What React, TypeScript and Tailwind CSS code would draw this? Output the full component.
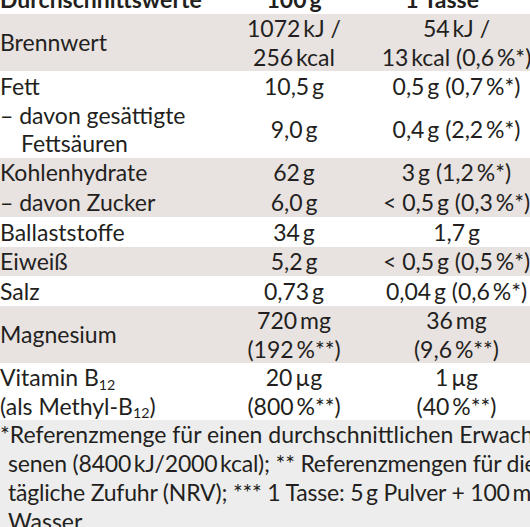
const T = "\u2009";

type Row = {
  label: React.ReactNode;
  a: React.ReactNode;
  b: React.ReactNode;
  grey?: boolean;
  tall?: boolean;
};

const B12 = (
  <>
    B<sub className="text-[62%]">12</sub>
  </>
);

const rows: Row[] = [
  {
    label: "Brennwert",
    a: (
      <>
        1072{T}kJ /<br />256{T}kcal
      </>
    ),
    b: (
      <>
        54{T}kJ /<br />13{T}kcal (0,6{T}%*)
      </>
    ),
    grey: true,
    tall: true,
  },
  { label: "Fett", a: `10,5${T}g`, b: `0,5${T}g (0,7${T}%*)` },
  {
    label: (
      <>
        – davon gesättigte
        <br />
        <span className="pl-[21px]">Fettsäuren</span>
      </>
    ),
    a: `9,0${T}g`,
    b: `0,4${T}g (2,2${T}%*)`,
    tall: true,
  },
  { label: "Kohlenhydrate", a: `62${T}g`, b: `3${T}g (1,2${T}%*)`, grey: true },
  { label: "– davon Zucker", a: `6,0${T}g`, b: `< 0,5${T}g (0,3${T}%*)`, grey: true },
  { label: "Ballaststoffe", a: `34${T}g`, b: `1,7${T}g` },
  { label: "Eiweiß", a: `5,2${T}g`, b: `< 0,5${T}g (0,5${T}%*)`, grey: true },
  { label: "Salz", a: `0,73${T}g`, b: `0,04${T}g (0,6${T}%*)` },
  {
    label: "Magnesium",
    a: (
      <>
        720{T}mg
        <br />
        (192{T}%**)
      </>
    ),
    b: (
      <>
        36{T}mg
        <br />
        (9,6{T}%**)
      </>
    ),
    grey: true,
    tall: true,
  },
  {
    label: (
      <>
        Vitamin {B12}
        <br />
        (als Methyl-{B12})
      </>
    ),
    a: (
      <>
        20{T}µg
        <br />
        (800{T}%**)
      </>
    ),
    b: (
      <>
        1{T}µg
        <br />
        (40{T}%**)
      </>
    ),
    tall: true,
  },
];

export default function App() {
  return (
    <div
      className="w-[530px] h-[527px] overflow-hidden bg-white text-[#231f20] text-[23px] leading-[28.5px]"
      style={{ fontFamily: "Lato, 'Liberation Sans', sans-serif" }}
    >
      <div className="w-[560px] mt-[-15px]">
        <div className="grid grid-cols-[235px_118px_207px] h-[29px] items-center font-bold">
          <div>Durchschnittswerte</div>
          <div className="text-center">100{T}g</div>
          <div className="text-center">1 Tasse***</div>
        </div>
        {rows.map((r, i) => (
          <div
            key={i}
            className={`grid grid-cols-[235px_118px_207px] items-center ${
              r.tall ? "h-[57px]" : "h-[29.7px]"
            } ${r.grey ? "bg-[#e8e2e0]" : "bg-white"}`}
          >
            <div className="whitespace-nowrap">{r.label}</div>
            <div className="text-center whitespace-nowrap">{r.a}</div>
            <div className="text-center whitespace-nowrap">{r.b}</div>
          </div>
        ))}
        <div className="bg-[#ededed] pb-4 leading-[29px] whitespace-nowrap">
          <div>*Referenzmenge für einen durchschnittlichen Erwach-</div>
          <div className="pl-[8px] tracking-[-0.2px]">
            senen (8400{T}kJ/2000{T}kcal); ** Referenzmengen für die
          </div>
          <div className="pl-[8px] tracking-[-0.2px]">
            tägliche Zufuhr (NRV); *** 1 Tasse: 5{T}g Pulver + 100{T}ml
          </div>
          <div className="pl-[8px]">Wasser.</div>
        </div>
      </div>
    </div>
  );
}
